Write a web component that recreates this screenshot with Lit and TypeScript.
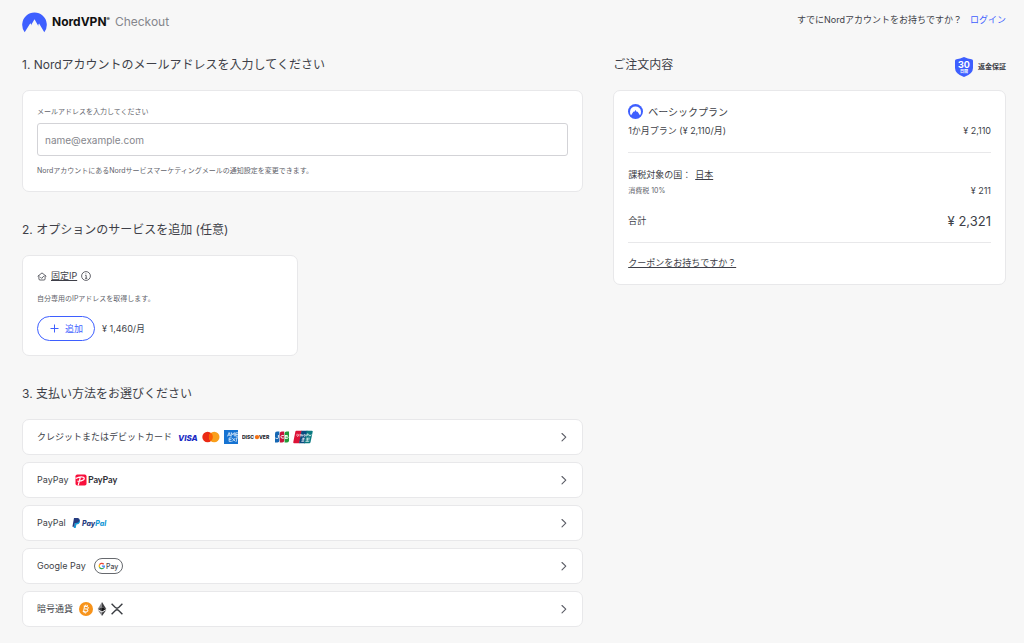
import { LitElement, html, css, svg } from "lit";
import { customElement, property } from "lit/decorators.js";

const chevron = html`<svg class="chevron" width="6" height="10" viewBox="0 0 6 10" aria-hidden="true">
  <path d="M1 1.500l3.800 3.700L1 8.900" fill="none" stroke="#5b5d66" stroke-width="1.1" stroke-linecap="round" stroke-linejoin="round" />
</svg>`;

const logoText = (x: number, y: number, size: number, fill: string, label: string, italic = false) =>
  svg`<text x=${x} y=${y} font-size=${size} fill=${fill} font-weight="800" font-style=${italic ? "italic" : "normal"}>${label}</text>`;

const visa = html`<svg width="20" height="16" viewBox="0 0 20 16" role="img" aria-label="Visa">
  ${logoText(0, 12, 8, "#1a2bc4", "VISA", true)}
</svg>`;

const mastercard = html`<svg width="18" height="12" viewBox="0 0 18 12" role="img" aria-label="Mastercard">
  <circle cx="5.6" cy="6" r="5.3" fill="#eb2a14" />
  <circle cx="12.2" cy="6" r="5.3" fill="#f99f1b" />
  <path d="M8.9 1.85a5.3 5.3 0 0 1 0 8.3a5.3 5.3 0 0 1 0-8.3z" fill="#fb5f04" />
</svg>`;

const amex = html`<svg width="14" height="14" viewBox="0 0 14 14" role="img" aria-label="American Express">
  <rect width="14" height="14" fill="#1673d2" />
  <g fill="none" stroke="#fff" stroke-width=".7">
    <path d="M3.5 6.4l1.6-3.9 1.6 3.9M4.2 5.2h1.900M7.3 6.400V2.600l1.500 2.200 1.500-2.200v3.800M14 2.800h-2.300v3.400H14M11.700 4.500H14" />
    <path d="M7.6 7.9H5.1v3.5h2.5M5.1 9.600h2.300M8.200 7.900l3.200 3.600M11.400 7.900l-3.200 3.600M12.400 11.600V7.900H14" />
  </g>
</svg>`;

const discover = html`<svg width="29" height="12" viewBox="0 0 29 12" role="img" aria-label="Discover">
  ${logoText(0, 8, 5, "#26262c", "DISC")}
  <circle cx="15" cy="6.1" r="2.2" fill="#f47216" />
  ${logoText(17, 8, 5, "#26262c", "VER")}
</svg>`;

const jcb = html`<svg width="14" height="12" viewBox="0 0 14 12" role="img" aria-label="JCB">
  <path d="M2 .5h2.4v9q0 2-2 2H0v-9q0-2 2-2z" fill="#1467b3" />
  <path d="M6.8.5h2.4v9q0 2-2 2H4.8v-9q0-2 2-2z" fill="#c9143c" />
  <path d="M11.6.5H14v9q0 2-2 2H9.6v-9q0-2 2-2z" fill="#229b3b" />
  <g fill="none" stroke="#fff" stroke-width=".9">
    <path d="M3.4 4v2.6q0 .9-1.1.9T.4 7M8.9 4.600q-3-.8-3 1.200t3 1.300M10 4.500h2.400q1 .6 0 1.300H10M10 7.400h2.600q1-.8 0-1.600M10.200 4.300v3.300" />
  </g>
</svg>`;

const unionpay = html`<svg width="20" height="14" viewBox="0 0 20 14" role="img" aria-label="UnionPay">
  <path d="M3.4 .7H9L6.4 13.2H1.2Q0 13.2 .3 12L2.4 1.6Q2.6 .7 3.4 .7z" fill="#dd1237" />
  <path d="M8.5 .7h6L12 13.2H6.1z" fill="#0b4b80" />
  <path d="M13.7 .7h5.1q1.1 0 .9 1L17.5 12.2q-.3 1-1.2 1h-5.2z" fill="#0a7a81" />
  <path d="M4.2 3.8q-.8 2.6 .4 2.6t1.5-2.5M7 6.4l.5-1.9q1.3-.5 1 .6l-.3 1.3M9.4 6.4l.4-2M11 5.3a.7 .7 0 1 0 1.3 .2a.7 .7 0 1 0-1.3-.2M13.5 6.4l.6-2.5h1.1q.9 1-1.3 1.4M16 6.3l.3-1.5 1 1.3 1-1.7" fill="none" stroke="#fff" stroke-width=".7" />
  <path d="M9 8.3h3M8.6 9.8h3M8.2 11.3h3M10.6 7.7l-.8 4M13 8.2h4M12.8 9.8h3.8M12.4 11.4h3.8M14.8 7.7l-.8 4" fill="none" stroke="#fff" stroke-width=".6" />
</svg>`;

const paypay = html`<svg width="44" height="14" viewBox="0 0 44 14" role="img" aria-label="PayPay">
  <rect x=".5" y="1.5" width="11" height="11" rx="1.8" fill="#f8103c" />
  <path d="M3.2 12.300L5.400 4.200M.7 5.600Q5 3.100 8.500 4.300q1.600 1.200-.3 2.800-2 1.300-5.800 1.100" fill="none" stroke="#fff" stroke-width="1.2" />
  <text class="lato" x="13" y="10" font-size="9" font-weight="700" fill="#303036">PayPay</text>
</svg>`;

const paypal = html`<svg width="36" height="12" viewBox="0 0 36 12" role="img" aria-label="PayPal">
  <path d="M3.3 2.6h3.6q1.8 .5 1 2.6-.8 2.2-3.5 2.2L3.7 11H1.7z" fill="#179bd7" />
  <path d="M2 1h4q2.2 .5 1.5 2.7-.6 2.3-3.6 2.3H2.8L2.1 9.8H.4z" fill="#253b80" />
  <text x="10" y="9" font-size="7" font-style="italic" font-weight="800" fill="#253b80">Pay<tspan fill="#179bd7">Pal</tspan></text>
</svg>`;

const gpay = html`<svg width="29" height="16" viewBox="0 0 29 16" role="img" aria-label="Google Pay">
  <rect x=".5" y=".5" width="28" height="15" rx="7.5" fill="#fff" stroke="#55585e" stroke-width=".9" />
  <g fill="none" stroke-width="1.3">
    <path d="M9.7 6.2A2.6 2.6 0 0 0 5.5 6.8" stroke="#ea4335" />
    <path d="M5.5 6.8a2.6 2.6 0 0 0 0 2.4" stroke="#fbbc04" />
    <path d="M5.5 9.2a2.6 2.6 0 0 0 4.1 .7" stroke="#34a853" />
    <path d="M9.6 9.9q.7-.7 .7-1.7H7.9" stroke="#4285f4" />
  </g>
  <text x="12" y="10.5" font-size="7" font-weight="500" fill="#4a4c52">Pay</text>
</svg>`;

const bitcoin = html`<svg width="14" height="14" viewBox="0 0 14 14" role="img" aria-label="Bitcoin">
  <circle cx="7" cy="7" r="7" fill="#f7931a" />
  <path d="M5.6 3.7L4.5 10M4.7 4.1l3.4 .5q2 .6 1 2-.6 .6-1.5 .5L5.5 6.8M7.6 7.1q2 .6 1.2 2.1-.6 .9-2.2 .6l-2.9-.5M6.9 2.6l-.3 1.6M8.4 2.9L8.1 4.4M5.4 9.6l-.3 1.6M6.9 9.9l-.3 1.6" fill="none" stroke="#fff" stroke-width="1" />
</svg>`;

const ethereum = html`<svg width="10" height="14" viewBox="0 0 10 14" role="img" aria-label="Ethereum">
  <path d="M5 0L.7 7.1 5 5.2z" fill="#8a8a8e" /><path d="M5 0l4.3 7.1L5 5.2z" fill="#3c3c3f" />
  <path d="M5 5.2L.7 7.1 5 9.6z" fill="#3c3c3f" /><path d="M5 5.2l4.3 1.9L5 9.6z" fill="#141416" />
  <path d="M.7 8L5 10.5V14z" fill="#8a8a8e" /><path d="M9.3 8L5 10.5V14z" fill="#3c3c3f" />
</svg>`;

const xrp = html`<svg width="12" height="12" viewBox="0 0 12 12" role="img" aria-label="XRP">
  <path d="M.6 .8l3.5 3.5q1.9 1.7 3.8 0L11.4 .8M.6 11.2l3.5-3.5q1.9-1.7 3.8 0l3.500 3.500" fill="none" stroke="#3a3d42" stroke-width="1.4" />
</svg>`;

const methods = [
  { name: "クレジットまたはデビットカード", marks: [visa, mastercard, amex, discover, jcb, unionpay] },
  { name: "PayPay", marks: [paypay] },
  { name: "PayPal", marks: [paypal] },
  { name: "Google Pay", marks: [gpay], wide: true },
  { name: "暗号通貨", marks: [bitcoin, ethereum, xrp] },
];

@customElement("payment-method")
class PaymentMethod extends LitElement {
  @property({ attribute: false }) method: any;

  static styles = css`
    :host { display: block; }
    .row {
      display: flex; align-items: center; gap: 6px; width: 100%; height: 36px; box-sizing: border-box;
      padding: 0 15px 0 14px; border: 1px solid #e8e8ea; border-radius: 7px; background: #fff;
      color: #3e3f48; font: inherit; line-height: 14px; text-align: left; cursor: pointer;
    }
    .marks { display: flex; align-items: center; gap: 4px; flex: 1; }
    .marks.wide { padding-left: 2px; }
    svg { display: block; flex: none; }
    svg text { font-family: Inter, sans-serif; }
    svg text.lato { font-family: Lato, sans-serif; }
  `;

  render() {
    const m = this.method;
    return html`<button class="row" type="button">
      <span>${m.name}</span>
      <span class="marks ${m.wide ? "wide" : ""}">${m.marks}</span>
      ${chevron}
    </button>`;
  }
}

@customElement("app-root")
class AppRoot extends LitElement {
  static styles = css`
    :host {
      display: block; min-height: 100vh; box-sizing: border-box; padding: 10px 18px 15px 22px;
      background: #f7f7f7; color: #3e3f48;
      font: 400 9px/14px Inter, "Noto Sans CJK JP", sans-serif;
    }
    svg { display: block; flex: none; }
    a { color: inherit; text-underline-offset: 1px; }
    h1, h2, p, dl, dd { margin: 0; font-weight: 400; }
    header { display: flex; justify-content: space-between; align-items: flex-start; height: 24px; }
    .brand { display: flex; align-items: center; gap: 5px; height: 24px; font-size: 12px; text-decoration: none; }
    .brand strong { color: #111; font-weight: 700; }
    .brand sup { font-size: 5px; line-height: 0; }
    .brand .sub { color: #85868c; }
    .account { display: flex; gap: 8px; padding-top: 3px; }
    .account a { color: #3e5fff; text-decoration: none; }
    main { display: grid; grid-template-columns: 10fr 7fr; gap: 30px; align-items: start; padding-top: 21px; }
    h2 { font-size: 12px; line-height: 20px; }
    .head { display: flex; align-items: center; justify-content: space-between; }
    .card { box-sizing: border-box; border: 1px solid #e8e8ea; border-radius: 7px; background: #fff; padding: 15px 14px 14px; margin-top: 15px; }
    section + section { margin-top: 28px; }
    .small { font-size: 7px; line-height: 12px; color: #62636b; }
    label, input { display: block; }
    input {
      width: 100%; height: 33px; box-sizing: border-box; margin: 5px 0 9px; padding: 0 7px;
      border: 1px solid #d3d3d7; border-radius: 3px; background: #fff; color: #3e3f48; font: inherit; font-size: 10px;
    }
    input::placeholder { color: #85868c; opacity: 1; }
    .options { display: grid; grid-template-columns: 1fr 1fr; gap: 9px; }
    .options .card, aside .card { padding-top: 13px; }
    .name { display: flex; align-items: center; gap: 4px; margin-bottom: 10px; }
    .buy { display: flex; align-items: center; gap: 7px; margin-top: 11px; }
    .add {
      display: flex; align-items: center; gap: 6px; height: 25px; box-sizing: border-box; padding: 0 11px 0 12px;
      border: 1px solid #3e5fff; border-radius: 13px; background: #fff; color: #3e5fff; font: inherit;
    }
    .methods { display: grid; gap: 7px; margin-top: 15px; }
    .guarantee { display: flex; align-items: center; gap: 5px; padding-top: 2px; margin-bottom: -2px; font-size: 7px; font-weight: 700; }
    .plan { display: flex; align-items: center; gap: 5px; font-size: 10px; line-height: 14px; }
    .line { display: flex; justify-content: space-between; align-items: center; line-height: 14px; }
    .plan + .line { margin-top: 5px; }
    .group { border-top: 1px solid #e8e8ea; margin-top: 14px; padding-top: 15px; }
    .coupon { padding-top: 13px; }
    .tax { margin-top: 2px; }
    .total { margin-top: 16px; }
    .total dd { font-size: 13px; }
    .country { margin-left: 4px; }
  `;

  render() {
    return html`
      <header>
        <a class="brand" href="#">
          <svg width="25" height="22" viewBox="0 0 25 22" aria-hidden="true">
            <path d="M2.7 21.3A12.3 12.3 0 1 1 22.3 21.3L17.1 12.6 16.2 14 16.6 15.4 12.5 8.2 9.600 13.300 10 14.500 8.300 12.200z" fill="#3e5fff" />
          </svg>
          <strong>NordVPN<sup>®</sup></strong><span class="sub">Checkout</span>
        </a>
        <div class="account"><span>すでにNordアカウントをお持ちですか？</span><a href="#">ログイン</a></div>
      </header>
      <main>
        <div>
          <section>
            <h2>1. Nordアカウントのメールアドレスを入力してください</h2>
            <div class="card">
              <label class="small" for="email">メールアドレスを入力してください</label>
              <input id="email" type="email" placeholder="name@example.com" />
              <p class="small">NordアカウントにあるNordサービスマーケティングメールの通知設定を変更できます。</p>
            </div>
          </section>
          <section>
            <h2>2. オプションのサービスを追加 (任意)</h2>
            <div class="options">
              <div class="card">
                <div class="name">
                  <svg width="10" height="9" viewBox="0 0 10 9" aria-hidden="true">
                    <path d="M1 4.1L5 .9l4 3.2M1.900 3.800v3.100q0 1.100 1.100 1.100h4q1.100 0 1.100-1.100V3.800M3.500 5.200l1.200 1.200 2-2.200" fill="none" stroke="#3e3f48" stroke-width=".8" stroke-linecap="round" stroke-linejoin="round" />
                  </svg>
                  <a href="#">固定IP</a>
                  <svg width="10" height="10" viewBox="0 0 10 10" aria-hidden="true">
                    <circle cx="5" cy="5" r="4.4" fill="none" stroke="#3e3f48" stroke-width=".8" />
                    <path d="M4.2 4.4H5.200V7.300M4 7.300h2.300M4.500 2.800h.8" fill="none" stroke="#3e3f48" stroke-width=".8" />
                  </svg>
                </div>
                <p class="small">自分専用のIPアドレスを取得します。</p>
                <div class="buy">
                  <button class="add" type="button">
                    <svg width="9" height="9" viewBox="0 0 9 9" aria-hidden="true"><path d="M4.5 .5v8M.5 4.5h8" stroke="#3e5fff" stroke-width="1" /></svg>
                    追加
                  </button>
                  <span>¥ 1,460/月</span>
                </div>
              </div>
            </div>
          </section>
          <section>
            <h2>3. 支払い方法をお選びください</h2>
            <div class="methods">${methods.map((m) => html`<payment-method .method=${m}></payment-method>`)}</div>
          </section>
        </div>
        <aside>
          <div class="head">
            <h2>ご注文内容</h2>
            <div class="guarantee">
              <svg width="18" height="20" viewBox="0 0 18 20" role="img" aria-label="30日間">
                <path d="M9 0Q13 2 16.5 2.2 18 2.3 18 3.8V11Q18 17 9 20 0 17 0 11V3.8Q0 2.3 1.5 2.2 5 2 9 0z" fill="#3e5fff" />
                <text x="9" y="11" font-size="9" font-weight="700" fill="#fff" text-anchor="middle">30</text>
                <text x="9" y="16" font-size="4" font-weight="700" fill="#fff" text-anchor="middle">日間</text>
              </svg>
              返金保証
            </div>
          </div>
          <div class="card">
            <div class="plan">
              <svg width="15" height="15" viewBox="0 0 15 15" aria-hidden="true">
                <circle cx="7.5" cy="7.5" r="7.5" fill="#3e5fff" />
                <path d="M3.1 11.2A5.5 5.5 0 1 1 11.9 11.2L9.5 7.5 9 8.3 7.5 5.9 6.1 8.1 5.5 7.5z" fill="#fff" />
              </svg>
              <span>ベーシックプラン</span>
            </div>
            <div class="line"><span>1か月プラン (¥ 2,110/月)</span><span>¥ 2,110</span></div>
            <dl class="group">
              <div>課税対象の国：<a class="country" href="#">日本</a></div>
              <div class="line tax"><dt class="small">消費税 10%</dt><dd>¥ 211</dd></div>
              <div class="line total"><dt>合計</dt><dd>¥ 2,321</dd></div>
            </dl>
            <div class="group coupon"><a href="#">クーポンをお持ちですか？</a></div>
          </div>
        </aside>
      </main>
    `;
  }
}
